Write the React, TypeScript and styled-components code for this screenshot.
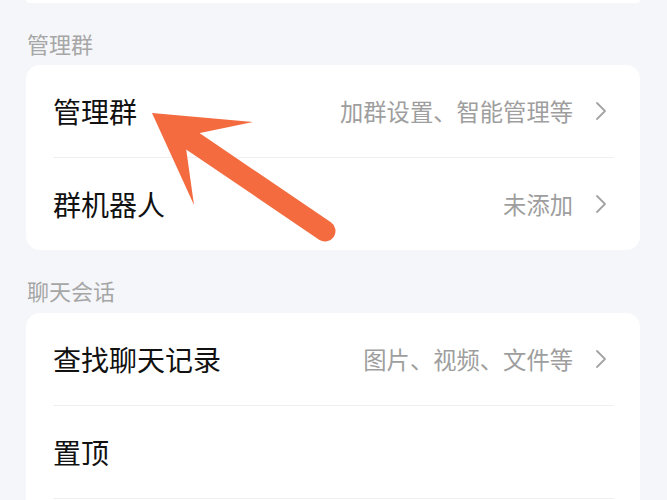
import React from 'react';
import styled, { createGlobalStyle, css } from 'styled-components';

const GlobalStyle = createGlobalStyle`
  html, body {
    margin: 0;
    padding: 0;
    background: #f5f6f9;
  }
  body {
    font-family: "Noto Sans CJK SC", "Noto Sans", sans-serif;
  }
`;

interface RowData {
  title: string;
  value?: string;
  arrow?: boolean;
}

// second list keeps going past the bottom of the screen
const sections: { label: string; rows: RowData[]; continues?: boolean }[] = [
  {
    label: '管理群',
    rows: [
      { title: '管理群', value: '加群设置、智能管理等', arrow: true },
      { title: '群机器人', value: '未添加', arrow: true },
    ],
  },
  {
    label: '聊天会话',
    continues: true,
    rows: [
      { title: '查找聊天记录', value: '图片、视频、文件等', arrow: true },
      { title: '置顶' },
    ],
  },
];

const Chevron = () => (
  <ChevronSvg viewBox="0 0 12 20" width="12" height="20">
    <path d="M2 2 L10 10 L2 18" fill="none" stroke="#a3a3a3" strokeWidth="1.8" strokeLinecap="round" strokeLinejoin="round" />
  </ChevronSvg>
);

const PointerArrow = () => (
  <ArrowSvg width="667" height="500" viewBox="0 0 667 500">
    <line x1="188" y1="138" x2="325" y2="231" stroke="#f36b3f" strokeWidth="21" strokeLinecap="round" />
    <polygon points="152,113 253,122 200,133 186,148 194,205" fill="#f36b3f" />
  </ArrowSvg>
);

const App: React.FC = () => {
  return (
    <>
      <GlobalStyle />
      <Page>
        <TopCard />
        {sections.map((section) => (
          <Section key={section.label}>
            <SectionLabel>{section.label}</SectionLabel>
            <Card $continues={section.continues}>
              {section.rows.map((row) => (
                <Row key={row.title}>
                  <Title>{row.title}</Title>
                  <Right>
                    {row.value && <Value>{row.value}</Value>}
                    {row.arrow && <Chevron />}
                  </Right>
                </Row>
              ))}
            </Card>
          </Section>
        ))}
        <PointerArrow />
      </Page>
    </>
  );
};

const Page = styled.div`
  position: relative;
  width: 667px;
  height: 500px;
  overflow: hidden;
  padding: 0 27px 0 26px;
  box-sizing: border-box;
  background: #f5f6f9;
`;

const TopCard = styled.div`
  height: 3px;
  background: #ffffff;
  border-radius: 0 0 12px 12px;
`;

const Section = styled.div`
  display: flex;
  flex-direction: column;
`;

const SectionLabel = styled.div`
  padding: 25px 0 7px 1px;
  font-size: 22px;
  line-height: 30px;
  color: #a6a6a6;

  ${Section} + ${Section} > & {
    padding-bottom: 8px;
  }
`;

const Row = styled.div`
  display: flex;
  align-items: center;
  justify-content: space-between;
  height: 92px;
  margin: 0 26px 0 27px;
  padding-right: 7px;
  border-bottom: 1px solid #efeff1;
`;

const Card = styled.div<{ $continues?: boolean }>`
  background: #ffffff;
  border-radius: 14px;
  overflow: hidden;

  ${({ $continues }) =>
    $continues
      ? css`
          border-radius: 14px 14px 0 0;
          padding-bottom: 20px;
        `
      : css`
          & > ${Row}:last-child {
            border-bottom: none;
          }
        `}
`;

const Title = styled.div`
  font-size: 28px;
  color: #111111;
`;

const Right = styled.div`
  display: flex;
  align-items: center;
  gap: 22px;
`;

const Value = styled.div`
  font-size: 23.3px;
  color: #9e9e9e;
`;

const ChevronSvg = styled.svg`
  display: block;
`;

const ArrowSvg = styled.svg`
  position: absolute;
  left: 0;
  top: 0;
  pointer-events: none;
`;

export default App;
